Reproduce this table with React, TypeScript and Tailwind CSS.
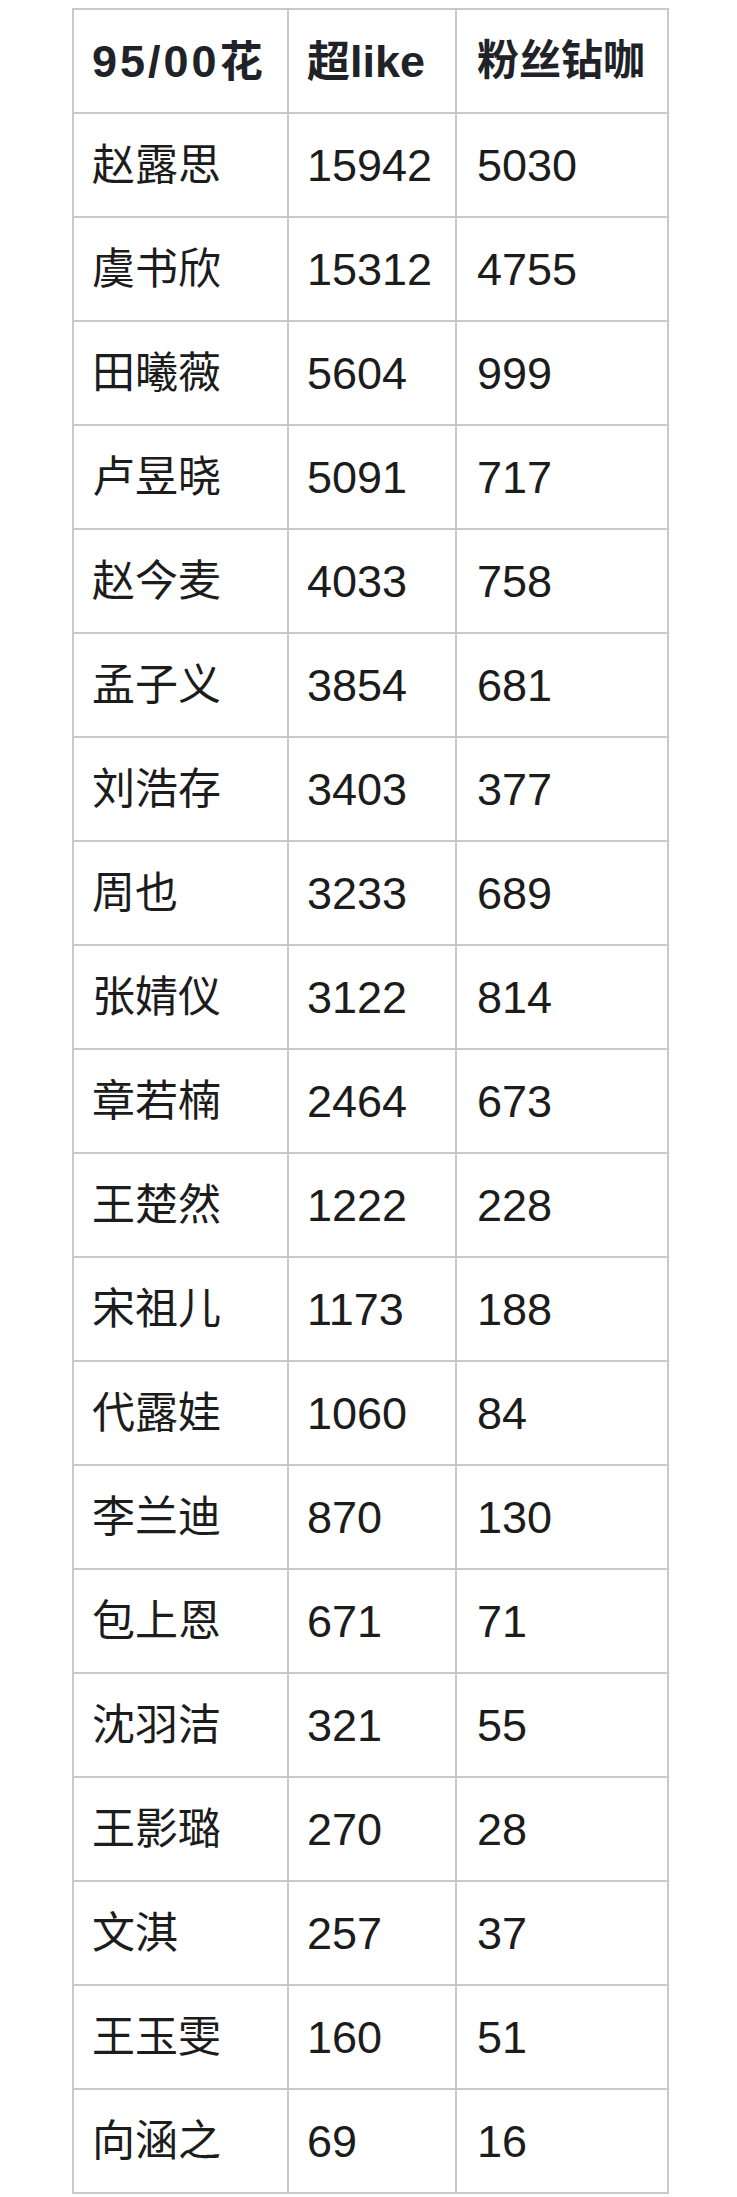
import React from 'react'

const ROWS: [string, string, string][] = [
  ['赵露思', '15942', '5030'],
  ['虞书欣', '15312', '4755'],
  ['田曦薇', '5604', '999'],
  ['卢昱晓', '5091', '717'],
  ['赵今麦', '4033', '758'],
  ['孟子义', '3854', '681'],
  ['刘浩存', '3403', '377'],
  ['周也', '3233', '689'],
  ['张婧仪', '3122', '814'],
  ['章若楠', '2464', '673'],
  ['王楚然', '1222', '228'],
  ['宋祖儿', '1173', '188'],
  ['代露娃', '1060', '84'],
  ['李兰迪', '870', '130'],
  ['包上恩', '671', '71'],
  ['沈羽洁', '321', '55'],
  ['王影璐', '270', '28'],
  ['文淇', '257', '37'],
  ['王玉雯', '160', '51'],
  ['向涵之', '69', '16'],
]

const cell = 'border-2 border-[#c9c9c9] pl-[18px] pr-2 align-middle text-left'

export default function App(): React.ReactElement {
  return (
    <div
      className="w-[737px] h-[2197px] bg-white pt-[8px] pl-[72px]"
      style={{ fontFamily: '"Liberation Sans", "Noto Sans CJK SC", sans-serif' }}
    >
      <table className="border-collapse table-fixed w-[595px] text-[45px] leading-none">
        <colgroup>
          <col className="w-[215px]" />
          <col className="w-[168px]" />
          <col className="w-[212px]" />
        </colgroup>
        <thead>
          <tr className="h-[104px]">
            <th className={`${cell} font-bold text-[#1f2328]`}>
              <span className="tracking-[3px]">95/00</span>
              <span className="text-[43px]">花</span>
            </th>
            <th className={`${cell} font-bold text-[#1f2328]`}>
              <span className="text-[43px]">超</span>like
            </th>
            <th className={`${cell} font-bold text-[#1f2328] pl-[20px] text-[42px]`}>粉丝钻咖</th>
          </tr>
        </thead>
        <tbody className="text-[#1c1c1c]">
          {ROWS.map(([name, like, fans]) => (
            <tr key={name} className="h-[104px]">
              <td className={`${cell} text-[43px]`}>{name}</td>
              <td className={cell}>{like}</td>
              <td className={`${cell} pl-[20px]`}>{fans}</td>
            </tr>
          ))}
        </tbody>
      </table>
    </div>
  )
}
